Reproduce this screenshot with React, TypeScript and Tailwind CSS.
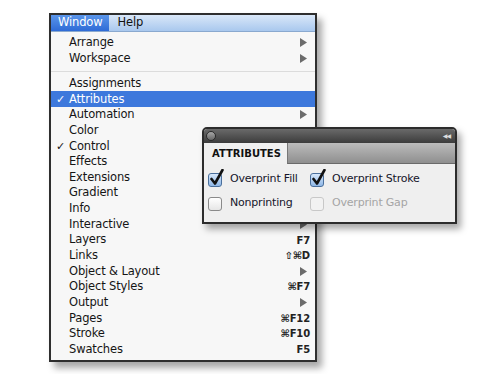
import React from "react";

type Item = {
  label: string;
  check?: boolean;
  selected?: boolean;
  arrow?: boolean;
  key?: string;
};

const topItems: Item[] = [
  { label: "Arrange", arrow: true },
  { label: "Workspace", arrow: true },
];

const items: Item[] = [
  { label: "Assignments" },
  { label: "Attributes", check: true, selected: true },
  { label: "Automation", arrow: true },
  { label: "Color" },
  { label: "Control", check: true },
  { label: "Effects" },
  { label: "Extensions" },
  { label: "Gradient" },
  { label: "Info" },
  { label: "Interactive", arrow: true },
  { label: "Layers", key: "F7" },
  { label: "Links", key: "⇧⌘D" },
  { label: "Object & Layout", arrow: true },
  { label: "Object Styles", key: "⌘F7" },
  { label: "Output", arrow: true },
  { label: "Pages", key: "⌘F12" },
  { label: "Stroke", key: "⌘F10" },
  { label: "Swatches", key: "F5" },
];

const Arrow = () => (
  <svg width="7" height="9" viewBox="0 0 7 9" className="mr-[8px]">
    <path d="M0 0 L7 4.5 L0 9 Z" fill="#6b6b6b" />
  </svg>
);

const MenuRow = ({ item }: { item: Item }) => (
  <div
    className={`flex items-center h-[15.65px] ${
      item.selected ? "bg-[#3d78dc] text-white" : "text-[#151515]"
    }`}
  >
    <span className="w-[18px] pl-[5px] text-[11px] leading-none">
      {item.check ? "✓" : ""}
    </span>
    <span className="flex-1">{item.label}</span>
    {item.arrow && <Arrow />}
    {item.key && (
      <span className="mr-[5px] text-[10px] font-bold text-[#222]">{item.key}</span>
    )}
  </div>
);

const Checkbox = ({ checked, disabled }: { checked?: boolean; disabled?: boolean }) => (
  <div
    className={`relative w-[14px] h-[14px] rounded-[3px] border ${
      checked
        ? "border-[#4a6f9c] bg-gradient-to-b from-[#d7e8fb] to-[#8fb7e6]"
        : disabled
        ? "border-[#c8c8c8] bg-[#f2f2f2]"
        : "border-[#8a8a8a] bg-gradient-to-b from-white to-[#e6e6e6]"
    }`}
  >
    {checked && (
      <svg
        width="14"
        height="17"
        viewBox="0 0 14 17"
        className="absolute left-[1px] top-[-5px]"
      >
        <path
          d="M1.5 10 L5 14.5 L12.5 1"
          fill="none"
          stroke="#111"
          strokeWidth="2.6"
          strokeLinecap="round"
          strokeLinejoin="round"
        />
      </svg>
    )}
  </div>
);

const Option = ({
  label,
  checked,
  disabled,
  width,
}: {
  label: string;
  checked?: boolean;
  disabled?: boolean;
  width: string;
}) => (
  <div className={`flex items-center gap-[8px] ${width}`}>
    <Checkbox checked={checked} disabled={disabled} />
    <span className={disabled ? "text-[#a5a5a5]" : "text-[#15152a]"}>{label}</span>
  </div>
);

export default function App() {
  return (
    <div
      className="relative w-[500px] h-[374px] bg-white overflow-hidden"
      style={{ fontFamily: '"DejaVu Sans", Verdana, sans-serif' }}
    >
      <div className="ml-[49px] pt-[13px]">
        <div className="w-[268px] border-2 border-[#2e2e2e] bg-[#f7f7f7] text-[11.5px] tracking-[-0.15px] shadow-[5px_6px_7px_rgba(0,0,0,0.35)]">
          <div className="flex h-[17px] items-center bg-gradient-to-b from-[#d9e7f8] to-[#a9c8ee] border-b border-[#8aa9cf]">
            <div className="flex h-full items-center bg-gradient-to-b from-[#5a95ea] to-[#2f6bd6] px-[7px] text-white">
              Window
            </div>
            <div className="px-[8px] text-[#111]">Help</div>
          </div>
          <div className="pt-[3px] pb-[3px]">
            {topItems.map((it) => (
              <MenuRow key={it.label} item={it} />
            ))}
            <div className="h-[9.5px] flex items-center">
              <div className="w-full h-px bg-[#dcdcdc]" />
            </div>
            {items.map((it) => (
              <MenuRow key={it.label} item={it} />
            ))}
          </div>
        </div>
      </div>

      <div className="absolute left-[202px] top-[127px] w-[255px] rounded-t-[5px] border-2 border-[#2c2c2c] bg-[#efefef] shadow-[4px_5px_7px_rgba(0,0,0,0.35)]">
        <div className="flex h-[14px] items-center justify-between rounded-t-[3px] bg-gradient-to-b from-[#6a6a6a] to-[#3c3c3c] px-[2px]">
          <div className="w-[10px] h-[10px] rounded-full bg-gradient-to-b from-[#a8a8a8] to-[#666] border border-[#2a2a2a]" />
          <span className="text-[6px] leading-none text-[#dcdcdc] tracking-[-1px] pr-[3px]">◀◀</span>
        </div>
        <div className="flex h-[21px]">
          <div className="flex items-center w-[83px] pl-[8px] bg-[#f0f0f0] text-[10px] font-bold text-[#111]">
            ATTRIBUTES
          </div>
          <div className="flex-1 bg-gradient-to-b from-[#bcbcbc] to-[#8f8f8f] border-l border-[#777] border-b border-b-[#6a6a6a]" />
        </div>
        <div className="px-[4px] pt-[7px] pb-[10px] text-[11px] tracking-[-0.2px]">
          <div className="flex items-center h-[17px]">
            <Option label="Overprint Fill" checked width="w-[102px]" />
            <Option label="Overprint Stroke" checked width="w-[140px]" />
          </div>
          <div className="flex items-center h-[17px] mt-[7px]">
            <Option label="Nonprinting" width="w-[102px]" />
            <Option label="Overprint Gap" disabled width="w-[140px]" />
          </div>
        </div>
      </div>
    </div>
  );
}
